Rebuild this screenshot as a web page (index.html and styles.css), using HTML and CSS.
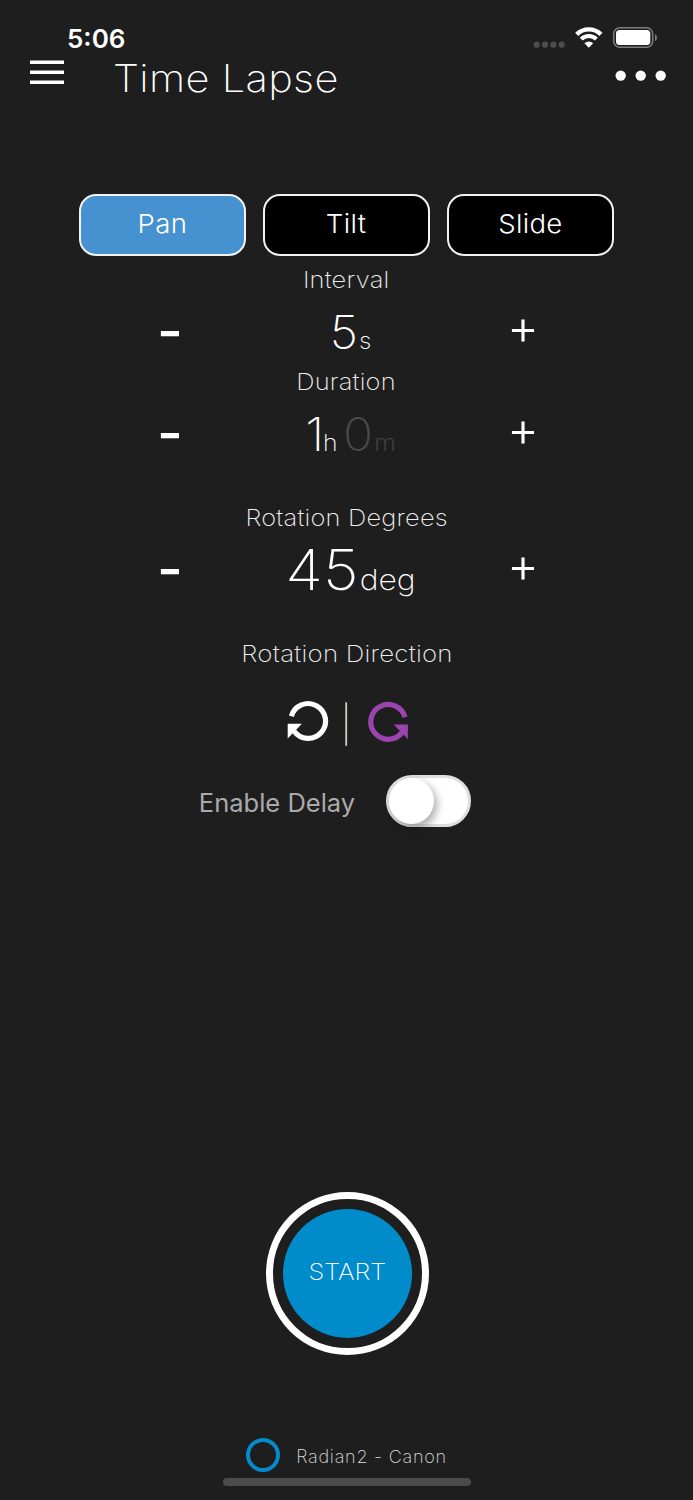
FILE: index.html
```html
<!DOCTYPE html>
<html lang="en">
<head>
<meta charset="utf-8">
<title>Time Lapse</title>
<link rel="stylesheet" href="styles.css">
</head>
<body>
<div class="status">
  <span class="clock">5:06</span>
  <svg class="status-icons" width="124" height="26" viewBox="0 0 124 26">
    <g fill="#4d4d4d"><circle cx="3.7" cy="19.7" r="3.1"/><circle cx="12" cy="19.7" r="3.1"/><circle cx="20.4" cy="19.7" r="3.1"/><circle cx="28.7" cy="19.7" r="3.1"/></g>
    <g fill="none" stroke="#fff"><path d="M43.700 9.300a17.400 17.400 0 0 1 24.200 0" stroke-width="4.400"/><path d="M48.200 14.200a10.800 10.800 0 0 1 15.200 0" stroke-width="4"/></g>
    <path d="M51.400 18.200a6.400 6.400 0 0 1 8.800 0L55.800 22.700z" fill="#fff"/>
    <rect x="80.700" y="2.700" width="39" height="19.600" rx="6" fill="none" stroke="#7c7c7c" stroke-width="1.500"/>
    <rect x="83" y="5" width="34.300" height="15" rx="3.500" fill="#fff"/>
    <path d="M122 9v7.500q2-1 2-3.700t-2-3.800z" fill="#7c7c7c"/>
  </svg>
</div>
<header class="header">
  <svg class="menu" width="34" height="25" viewBox="0 0 34 25"><path d="M0 2.200h34M0 12.200h34M0 22.200h34" stroke="#fff" stroke-width="3.600"/></svg>
  <h1 class="title">Time Lapse</h1>
  <svg class="more" width="51" height="12" viewBox="0 0 51 12" fill="#fff"><circle cx="5.700" cy="5.600" r="5.200"/><circle cx="25.700" cy="5.600" r="5.200"/><circle cx="45.700" cy="5.600" r="5.200"/></svg>
</header>
<nav class="tabs">
  <button class="tab active"><span class="tab-text">Pan</span></button>
  <button class="tab"><span class="tab-text">Tilt</span></button>
  <button class="tab"><span class="tab-text">Slide</span></button>
</nav>
<main class="settings">
  <section class="setting">
    <h2 class="label interval">Interval</h2>
    <div class="stepper"><span class="minus">-</span><div class="value"><span class="num">5</span><span class="unit">s</span></div><span class="plus">+</span></div>
  </section>
  <section class="setting tall">
    <h2 class="label duration">Duration</h2>
    <div class="stepper"><span class="minus">-</span><div class="value dur"><span class="num">1</span><span class="unit hours">h</span><span class="num dim minutes">0</span><span class="unit dim">m</span></div><span class="plus">+</span></div>
  </section>
  <section class="setting tall">
    <h2 class="label degrees">Rotation Degrees</h2>
    <div class="stepper"><span class="minus">-</span><div class="value large"><span class="num">45</span><span class="unit">deg</span></div><span class="plus">+</span></div>
  </section>
  <section class="direction">
    <h2 class="label direction-label">Rotation Direction</h2>
    <svg class="arrows" width="122" height="46" viewBox="0 0 122 46">
      <g fill="none" stroke-width="5.200"><path d="M4.400 16.300A17.400 17.400 0 1 1 7 31.100" stroke="#fff"/><path d="M118 17.300A17.400 17.400 0 1 0 115.300 32.100" stroke="#9b44ae"/></g>
      <path d="M.7 23.700h14.200L.7 38.600z" fill="#fff"/><path d="M120.900 24.600h-14.200l14.200 14.600z" fill="#9b44ae"/>
      <path d="M59.200 2.300v43.500" stroke="#d0cdc6" stroke-width="1.800"/>
    </svg>
  </section>
  <div class="delay"><span class="delay-label">Enable Delay</span><span class="switch"><span class="knob"></span></span></div>
</main>
<button class="start"><span class="start-face"><span class="start-text">START</span></span></button>
<footer class="device"><span class="ring"></span><span class="device-name">Radian2 - Canon</span></footer>
<div class="home-bar"></div>
</body>
</html>
```
FILE: styles.css
```css
* { box-sizing: border-box; }
body { margin: 0; width: 693px; height: 1500px; overflow: hidden; background: #1e1e1e; color: #fff; font-family: Inter, "Liberation Sans", sans-serif; font-weight: 200; display: flex; flex-direction: column; align-items: center; }
h1, h2 { margin: 0; font-weight: 200; white-space: nowrap; }
button { font: inherit; color: inherit; padding: 0; }
.status { width: 100%; height: 54px; padding: 25px 36px 0 67px; display: flex; justify-content: space-between; }
.clock { font-size: 26px; line-height: 28px; font-weight: 600; }
.header { width: 100%; height: 140px; display: flex; align-items: flex-start; padding: 0 27px 0 30px; }
.menu { margin-top: 6px; }
.title { margin-left: 49px; font-size: 38.500px; line-height: 49px; letter-spacing: .3px; transform: scaleX(1.08); transform-origin: left; }
.more { margin: 16px 0 0 auto; }
.tabs { display: flex; gap: 17px; }
.tab { width: 167px; height: 62px; border: 2px solid #f2f2f2; border-radius: 17px; background: #000; font-size: 26px; line-height: 32px; font-weight: 300; padding-bottom: 3px; letter-spacing: .3px; }
.tab-text { display: inline-block; transform: scaleX(1.06); }
.active { background: #4691cf; }
.settings { width: 100%; display: flex; flex-direction: column; align-items: center; }
.setting { width: 100%; height: 102px; padding-top: 8px; display: flex; flex-direction: column; align-items: center; }
.tall { height: 136px; }
.label { font-size: 23px; line-height: 32px; color: #eee; letter-spacing: .2px; transform: scaleX(1.105); }
.direction-label { transform: scaleX(1.125); }
.stepper { width: 385px; height: 70px; display: grid; grid-template-columns: 32px 1fr 32px; align-items: start; }
.minus, .plus { text-align: center; }
.minus { font-size: 56px; line-height: 71px; font-weight: 500; }
.plus { font-size: 49px; line-height: 61px; font-weight: 300; }
.value { display: flex; justify-content: center; align-items: baseline; line-height: 72px; transform: translateX(4px) scaleX(1.06); }
.num { font-size: 46px; }
.unit { font-size: 23px; margin-left: 1px; }
.dim { color: #4a4a4a; }
.dur { transform: translateX(4px) scaleX(1.08); }
.hours { margin-left: -1px; }
.minutes { margin-left: 5px; }
.large { transform: translateX(4px) scaleX(1.1); }
.large .num { font-size: 56px; }
.large .unit { font-size: 29px; }
.direction { height: 145px; padding-top: 8px; display: flex; flex-direction: column; align-items: center; }
.arrows { margin: 30px 0 0 3px; }
.delay { display: flex; align-items: center; gap: 31px; height: 52px; margin-right: 23px; }
.delay-label { font-size: 25.500px; font-weight: 400; color: #aaa; padding-top: 3px; }
.switch { width: 85px; height: 52px; border-radius: 26px; border: 3px solid #e0dee0; background: #fff; }
.knob { display: block; width: 45px; height: 46px; border-radius: 50%; background: #fff; box-shadow: 3px 4px 9px #0005; }
.start { width: 163px; height: 163px; margin: 365px 0 0 1px; border: 7px solid #fff; border-radius: 50%; background: none; display: flex; align-items: center; justify-content: center; flex-shrink: 0; }
.start-face { width: 129px; height: 129px; border-radius: 50%; background: #008bcb; font-size: 23px; line-height: 127px; }
.start-text { display: inline-block; transform: scaleX(1.1); }
.device { display: flex; align-items: center; gap: 16px; height: 34px; margin-top: 83px; }
.ring { width: 34px; height: 34px; border: 4px solid #058bcc; border-radius: 50%; }
.device-name { font-size: 18px; line-height: 24px; color: #ddd; letter-spacing: .75px; margin-top: 3px; }
.home-bar { width: 248px; height: 8px; margin-top: 6px; border-radius: 4px; background: #4b4b4b; }
```
